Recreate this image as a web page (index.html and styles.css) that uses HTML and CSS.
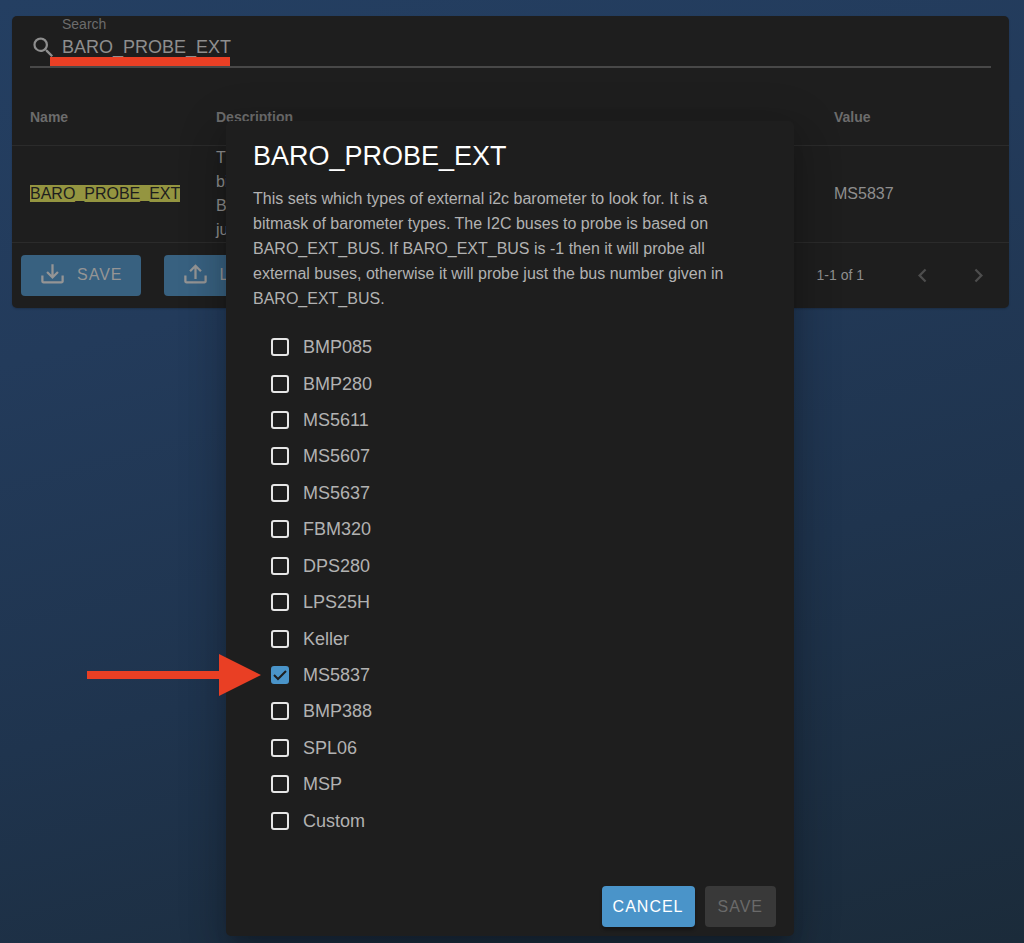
FILE: index.html
```html
<!DOCTYPE html>
<html lang="en">
<head>
<meta charset="utf-8">
<meta name="viewport" content="width=device-width, initial-scale=1">
<title>Parameters</title>
<link rel="stylesheet" href="styles.css">
</head>
<body>
<main class="card">
  <div class="search">
    <svg class="icon" viewBox="0 0 24 24" aria-hidden="true"><path d="M9.5,3A6.5,6.5 0 0,1 16,9.5C16,11.11 15.41,12.59 14.44,13.73L14.71,14H15.5L20.5,19L19,20.5L14,15.5V14.71L13.73,14.44C12.59,15.41 11.11,16 9.5,16A6.5,6.5 0 0,1 3,9.5A6.5,6.5 0 0,1 9.5,3M9.5,5C7,5 5,7 5,9.5C5,12 7,14 9.5,14C12,14 14,12 14,9.5C14,7 12,5 9.5,5Z"/></svg>
    <div class="field">
      <label class="field-label" for="search">Search</label>
      <input class="field-input" id="search" type="text" value="BARO_PROBE_EXT">
    </div>
    <span class="underline-mark"></span>
  </div>
  <table class="params">
    <thead>
      <tr><th class="col-name">Name</th><th>Description</th><th class="col-value">Value</th></tr>
    </thead>
    <tbody>
      <tr>
        <td><mark class="match">BARO_PROBE_EXT</mark></td>
        <td>This sets which types of external i2c barometer to look for. It is a<br>bitmask of barometer types. The I2C buses to probe is based on<br>BARO_EXT_BUS. If it is -1 then it will probe all, otherwise<br>just the bus number given in BARO_EXT_BUS.</td>
        <td>MS5837</td>
      </tr>
    </tbody>
  </table>
  <footer class="footer">
    <button class="btn btn-dim" type="button"><svg class="icon" viewBox="0 0 24 24" aria-hidden="true"><path d="M2 12H4V17H20V12H22V17C22 18.11 21.11 19 20 19H4C2.9 19 2 18.11 2 17V12M12 15L17.55 9.54L16.13 8.13L13 11.25V2H11V11.25L7.88 8.13L6.46 9.55L12 15Z"/></svg>SAVE</button>
    <button class="btn btn-dim" type="button"><svg class="icon" viewBox="0 0 24 24" aria-hidden="true"><path d="M2 12H4V17H20V12H22V17C22 18.11 21.11 19 20 19H4C2.9 19 2 18.11 2 17V12M12 2L6.46 7.46L7.88 8.88L11 5.75V15H13V5.75L16.13 8.88L17.55 7.45L12 2Z"/></svg>LOAD</button>
    <div class="pager">
      <span class="pager-range">1-1 of 1</span>
      <button class="pager-btn" type="button" aria-label="Previous page" disabled><svg class="icon" viewBox="0 0 24 24"><path d="M15.41,16.58L10.83,12L15.41,7.41L14,6L8,12L14,18L15.41,16.58Z"/></svg></button>
      <button class="pager-btn" type="button" aria-label="Next page" disabled><svg class="icon" viewBox="0 0 24 24"><path d="M8.59,16.58L13.17,12L8.59,7.41L10,6L16,12L10,18L8.59,16.58Z"/></svg></button>
    </div>
  </footer>
</main>

<div class="overlay">
  <section class="dialog" role="dialog" aria-labelledby="dialog-title">
    <h2 class="dialog-title" id="dialog-title">BARO_PROBE_EXT</h2>
    <p class="dialog-text">This sets which types of external i2c barometer to look for. It is a bitmask of barometer types. The I2C buses to probe is based on BARO_EXT_BUS. If BARO_EXT_BUS is -1 then it will probe all external buses, otherwise it will probe just the bus number given in BARO_EXT_BUS.</p>
    <div class="options">
      <label class="option"><input class="check" type="checkbox">BMP085</label>
      <label class="option"><input class="check" type="checkbox">BMP280</label>
      <label class="option"><input class="check" type="checkbox">MS5611</label>
      <label class="option"><input class="check" type="checkbox">MS5607</label>
      <label class="option"><input class="check" type="checkbox">MS5637</label>
      <label class="option"><input class="check" type="checkbox">FBM320</label>
      <label class="option"><input class="check" type="checkbox">DPS280</label>
      <label class="option"><input class="check" type="checkbox">LPS25H</label>
      <label class="option"><input class="check" type="checkbox">Keller</label>
      <label class="option"><input class="check" type="checkbox" checked>MS5837
        <svg class="arrow" viewBox="0 0 174 42" aria-hidden="true"><path d="M0 17H132V0L174 21L132 42V25H0Z"/></svg>
      </label>
      <label class="option"><input class="check" type="checkbox">BMP388</label>
      <label class="option"><input class="check" type="checkbox">SPL06</label>
      <label class="option"><input class="check" type="checkbox">MSP</label>
      <label class="option"><input class="check" type="checkbox">Custom</label>
    </div>
    <div class="actions">
      <button class="btn btn-primary" type="button">CANCEL</button>
      <button class="btn btn-disabled" type="button" disabled>SAVE</button>
    </div>
  </section>
</div>
</body>
</html>
```

FILE: styles.css
```css
* { box-sizing: border-box; }

body {
  margin: 0;
  min-height: 100vh;
  padding: 16px 15px 0 12px;
  overflow-x: hidden;
  background: linear-gradient(165deg, #243f62 0%, #233b5b 30%, #1f344e 62%, #1b2b3a 100%);
  color: #8e8e8e;
  font: 16px/24px "Liberation Sans", Arial, sans-serif;
}

.icon {
  width: 27px;
  height: 27px;
  flex: none;
  fill: currentColor;
}

.card {
  background: #1e1e1e;
  border-radius: 5px;
  box-shadow: 0 1px 2px rgba(0, 0, 0, .2);
}

.search {
  position: relative;
  display: flex;
  align-items: flex-end;
  gap: 5px;
  margin: 0 18px;
  padding-bottom: 5px;
  border-bottom: 2px solid #484848;
}

.field {
  flex: 1;
  display: flex;
  flex-direction: column;
}

.field-label {
  font-size: 14px;
  line-height: 17px;
  color: #6c6c6c;
}

.field-input {
  width: 100%;
  height: 28px;
  padding: 0;
  border: 0;
  outline: 0;
  background: none;
  color: #8e8e8e;
  font: inherit;
  font-size: 18px;
}

.underline-mark {
  position: absolute;
  left: 20px;
  bottom: 0;
  width: 180px;
  height: 9px;
  background: #e93f24;
}

.params {
  width: 100%;
  table-layout: fixed;
  border-collapse: collapse;
  margin-top: 22px;
}

.params th,
.params td {
  padding: 0 18px;
  text-align: left;
  border-bottom: 1px solid #2b2b2b;
}

.params th {
  height: 55px;
  font-size: 14px;
  color: #6c6c6c;
}

.params .col-name { width: 186px; }
.params .col-value { width: 193px; }

.match {
  background: #949540;
  color: #1e1e1e;
}

.footer {
  display: flex;
  align-items: center;
  gap: 23px;
  padding: 12px 17px 12px 9px;
}

.btn {
  display: inline-flex;
  align-items: center;
  justify-content: center;
  gap: 11px;
  height: 41px;
  padding: 0 11px;
  border: 0;
  border-radius: 4px;
  font: inherit;
  letter-spacing: 1px;
}

.btn-dim {
  padding: 0 18px;
  background: #386180;
  color: #959595;
}

.btn-primary {
  background: #4a94c9;
  color: #fff;
  box-shadow: 0 3px 3px rgba(0, 0, 0, .3);
}

.btn-disabled {
  padding: 0 13px;
  background: #393939;
  color: #6a6a6a;
}

.pager {
  display: flex;
  align-items: center;
  gap: 29px;
  margin-left: auto;
  font-size: 14px;
}

.pager-range { margin-right: 16px; }

.pager-btn {
  display: flex;
  padding: 0;
  border: 0;
  background: none;
  color: #4d4d4d;
}

.overlay {
  position: absolute;
  inset: 0;
  display: flex;
  justify-content: center;
  min-height: 100vh;
  padding: 121px 4px 7px 0;
  overflow: hidden;
}

.dialog {
  display: flex;
  flex-direction: column;
  width: 100%;
  max-width: 568px;
  background: #1e1e1e;
  border-radius: 5px;
  box-shadow: 0 11px 15px -7px rgba(0, 0, 0, .2),
    0 24px 38px 3px rgba(0, 0, 0, .14),
    0 9px 46px 8px rgba(0, 0, 0, .12);
}

.dialog-title {
  margin: 0;
  padding: 19px 27px 14px;
  color: #fff;
  font-size: 27px;
  font-weight: 400;
  line-height: 32px;
}

.dialog-text {
  margin: 0;
  padding: 0 54px 0 27px;
  line-height: 25px;
  color: #b2b2b2;
}

.options {
  flex: 1;
  display: grid;
  grid-auto-rows: 1fr;
  padding: 18px 45px 0;
}

.option {
  position: relative;
  display: flex;
  align-items: center;
  gap: 14px;
  font-size: 18px;
  color: #b2b2b2;
}

.check {
  appearance: none;
  width: 18px;
  height: 18px;
  margin: 0;
  border: 2px solid #e6e6e6;
  border-radius: 3px;
}

.check:checked {
  border-color: #4a94c9;
  background: #4a94c9 url("data:image/svg+xml,%3Csvg xmlns='http://www.w3.org/2000/svg' viewBox='0 0 14 14'%3E%3Cpath d='M1 7L5 11L13 3' fill='none' stroke='%231e1e1e' stroke-width='2'/%3E%3C/svg%3E") center / 14px 14px no-repeat;
}

.arrow {
  position: absolute;
  right: 100%;
  margin-right: 10px;
  width: 174px;
  height: 42px;
  fill: #e93f24;
}

.actions {
  display: flex;
  justify-content: flex-end;
  gap: 10px;
  padding: 47px 18px 9px;
}
```
